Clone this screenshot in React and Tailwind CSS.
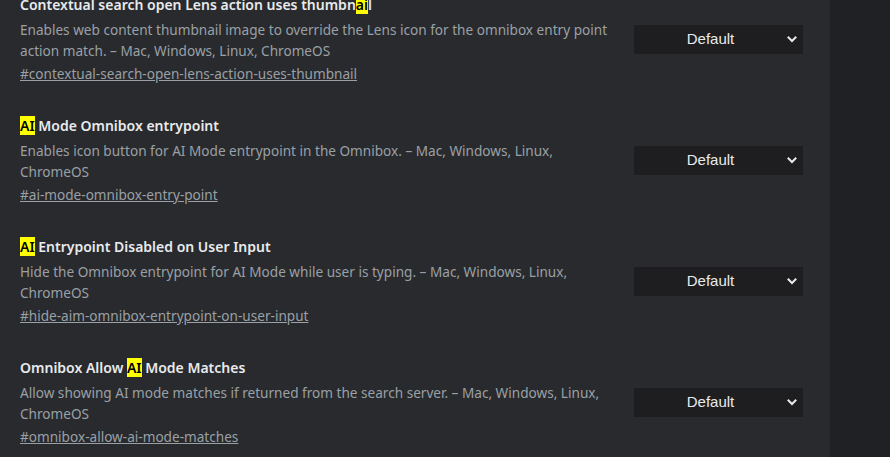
import React from "react";

const Hl = ({ children }) => (
  <span className="bg-[#ffff00] text-black">{children}</span>
);

const flags = [
  {
    title: (
      <>
        Contextual search open Lens action uses thumbn<Hl>ai</Hl>l
      </>
    ),
    desc: "Enables web content thumbnail image to override the Lens icon for the omnibox entry point action match. – Mac, Windows, Linux, ChromeOS",
    link: "#contextual-search-open-lens-action-uses-thumbnail",
  },
  {
    title: (
      <>
        <Hl>AI</Hl> Mode Omnibox entrypoint
      </>
    ),
    desc: "Enables icon button for AI Mode entrypoint in the Omnibox. – Mac, Windows, Linux, ChromeOS",
    link: "#ai-mode-omnibox-entry-point",
  },
  {
    title: (
      <>
        <Hl>AI</Hl> Entrypoint Disabled on User Input
      </>
    ),
    desc: "Hide the Omnibox entrypoint for AI Mode while user is typing. – Mac, Windows, Linux, ChromeOS",
    link: "#hide-aim-omnibox-entrypoint-on-user-input",
  },
  {
    title: (
      <>
        Omnibox Allow <Hl>AI</Hl> Mode Matches
      </>
    ),
    desc: "Allow showing AI mode matches if returned from the search server. – Mac, Windows, Linux, ChromeOS",
    link: "#omnibox-allow-ai-mode-matches",
  },
];

const SelectBox = () => (
  <div className="w-[169px] h-[29px] bg-[#1e1e20] flex items-center shrink-0 relative">
    <span className="flex-1 text-center pr-[16px] text-[15px] text-[#e8eaed] font-['Liberation_Sans',Arial,sans-serif]">
      Default
    </span>
    <svg
      className="absolute right-[5px] top-[10px]"
      width="12"
      height="8"
      viewBox="0 0 12 8"
      fill="none"
    >
      <path
        d="M2.5 2.5 L6 6 L9.5 2.5"
        stroke="#e8eaed"
        strokeWidth="2"
        strokeLinecap="square"
      />
    </svg>
  </div>
);

export default function App() {
  return (
    <div className="w-[890px] h-[457px] overflow-hidden flex bg-[#202124] font-['Noto_Sans','Open_Sans',sans-serif]">
      <div className="w-[830px] bg-[#292a2d] pl-5 pr-[27px]">
        <div className="flex flex-col gap-8 -mt-[5px]">
          {flags.map((f, i) => (
            <div key={i} className="flex items-center gap-5">
              <div className="flex-1 min-w-0">
                <div className="text-[14px] leading-5 font-semibold text-[#e8eaed]">
                  {f.title}
                </div>
                <p className="mt-1 text-[13.6px] leading-[21px] text-[#9aa0a6]">
                  {f.desc}
                </p>
                <a
                  href={f.link}
                  className="block mt-[2px] text-[13.6px] leading-[21px] text-[#9aa0a6] underline"
                >
                  {f.link}
                </a>
              </div>
              <SelectBox />
            </div>
          ))}
        </div>
      </div>
      <div className="flex-1" />
    </div>
  );
}
